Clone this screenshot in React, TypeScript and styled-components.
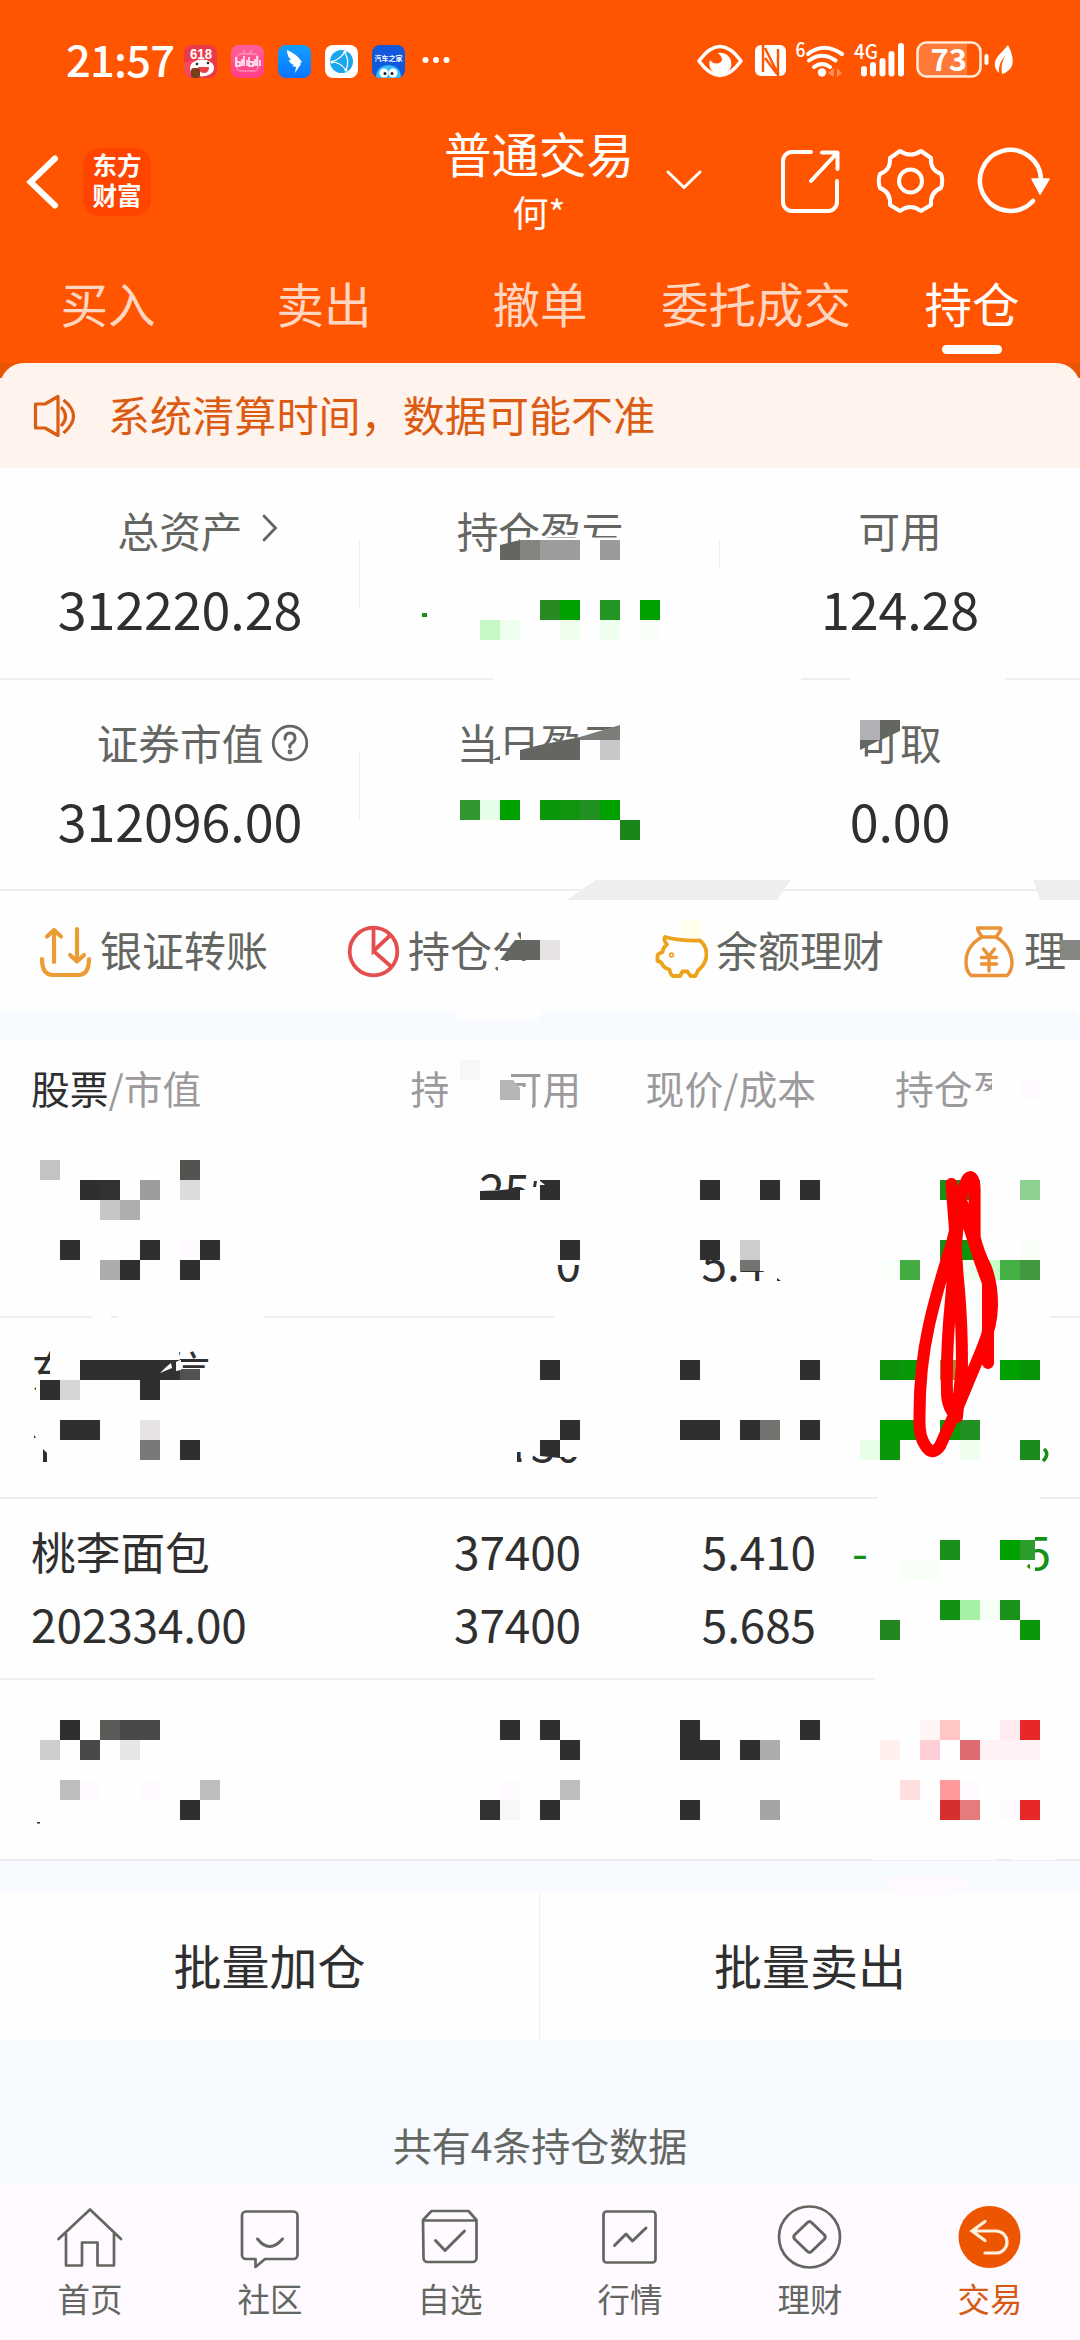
import React from "react";
import styled, { createGlobalStyle } from "styled-components";

const INK = "#2f2f2f";
const GREY = "#646662";
const PAPER = "#fefefe";
const BAND = "#f7faff";
const LINE = "#eeeeee";

const GlobalStyle = createGlobalStyle`
  * { box-sizing: border-box; }
  body {
    margin: 0;
    background: ${BAND};
    font-family: "Noto Sans CJK SC", "Noto Sans", sans-serif;
    color: ${INK};
  }
  svg { display: block; flex: none; }
`;

const Page = styled.div`
  position: relative;
  width: 1080px;
  height: 2340px;
  overflow: hidden;
  display: flex;
  flex-direction: column;
  background: ${BAND};
`;

/* ---------- header ---------- */

const Header = styled.header`
  height: 363px;
  flex: none;
  background: #ff5500;
  color: #fff;
  display: flex;
  flex-direction: column;
`;

const StatusBar = styled.div`
  height: 122px;
  padding: 0 64px 0 66px;
  display: flex;
  align-items: center;
  justify-content: space-between;
`;

const StatusGroup = styled.div<{ $gap: number }>`
  display: flex;
  align-items: center;
  gap: ${(p) => p.$gap}px;
`;

const Clock = styled.span`
  width: 104px;
  font-size: 43.5px;
  line-height: 50px;
  font-weight: 500;
  letter-spacing: -0.8px;
  margin-top: -5px;
`;

const AppBadge = styled.span<{ $bg: string }>`
  width: 33px;
  height: 33px;
  border-radius: 8px;
  overflow: hidden;
  background: ${(p) => p.$bg};
`;

const NavBar = styled.div`
  height: 120px;
  padding: 0 28px 0 26px;
  display: grid;
  grid-template-columns: 420px 186px 1fr;
  align-items: center;
`;

const NavLeft = styled.div`
  display: flex;
  align-items: center;
  gap: 23px;
`;

const Logo = styled.div`
  width: 68px;
  height: 68px;
  border-radius: 16px;
  background: #ff4400;
  padding-top: 2px;
  text-align: center;
  font-size: 24.5px;
  font-weight: 700;
  line-height: 30px;
`;

const Title = styled.div`
  display: flex;
  flex-direction: column;
  align-items: center;
  white-space: nowrap;
  font-size: 47.5px;
  line-height: 60px;
  margin-top: -3px;
`;

const Account = styled.span`
  font-size: 36px;
  line-height: 56px;
`;

const NavRight = styled.div`
  display: flex;
  align-items: center;
  padding-left: 28px;
`;

const Tabs = styled.nav`
  flex: 1;
  display: grid;
  grid-template-columns: repeat(5, 1fr);
`;

const Tab = styled.div<{ $active?: boolean }>`
  display: flex;
  flex-direction: column;
  align-items: center;
  padding-top: 25px;
  font-size: 47.5px;
  line-height: 72px;
  color: ${(p) => (p.$active ? "#fff" : "#ffd6c2")};
  &::after {
    content: "";
    width: 60px;
    height: 9px;
    margin-top: 6px;
    border-radius: 5px;
    background: ${(p) => (p.$active ? "#fff" : "transparent")};
  }
`;

/* ---------- notice ---------- */

const NoticeWrap = styled.div`
  height: 105px;
  flex: none;
  background: linear-gradient(#ea5505 0 15px, #fff3ee 15px);
`;

const Notice = styled.div`
  height: 100%;
  padding: 0 32px;
  display: flex;
  align-items: center;
  gap: 31px;
  border-radius: 24px 24px 0 0;
  background: #fff3ee;
  color: #db5b12;
  font-size: 42px;
  line-height: 60px;
  span { margin-top: -4px; letter-spacing: 0.1px; }
`;

/* ---------- summary ---------- */

const Summary = styled.section`
  flex: none;
  background: ${PAPER};
`;

const SummaryRow = styled.div`
  height: 211.5px;
  display: grid;
  grid-template-columns: repeat(3, 360px);
  border-bottom: 2px solid ${LINE};
`;

const Metric = styled.div<{ $tick: number }>`
  display: flex;
  flex-direction: column;
  align-items: center;
  padding-top: 32px;
  background: linear-gradient(#ececec, #ececec) no-repeat right 73px / 1.5px
    ${(p) => p.$tick}px;
  background-position: right 0 top 73px;
`;

const MetricLabel = styled.div`
  position: relative;
  font-size: 41.7px;
  line-height: 60px;
  color: ${GREY};
`;

const LabelIcon = styled.span<{ $gap: number }>`
  position: absolute;
  left: calc(100% + ${(p) => p.$gap}px);
  top: 12px;
`;

const MetricValue = styled.div`
  margin-top: 12px;
  font-size: 52px;
  line-height: 72px;
  letter-spacing: -0.1px;
`;

/* ---------- shortcuts ---------- */

const Shortcuts = styled.section`
  height: 120px;
  flex: none;
  display: flex;
  overflow: hidden;
  padding-left: 39px;
  background: ${PAPER};
`;

const Shortcut = styled.div`
  width: 308px;
  flex: none;
  display: flex;
  align-items: center;
  gap: 8px;
  font-size: 42px;
  line-height: 60px;
  color: ${GREY};
  white-space: nowrap;
  span { margin-top: -5px; }
`;

const Gap = styled.div<{ $h: number }>`
  height: ${(p) => p.$h}px;
  flex: none;
`;

/* ---------- holdings ---------- */

const Table = styled.section`
  flex: none;
  background: ${PAPER};
`;

const Line = styled.div`
  display: grid;
  grid-template-columns: 369px 181px 235px 235px;
  padding: 0 29px 0 31px;
`;

const HeadLine = styled(Line)`
  height: 96px;
  align-items: center;
  padding-bottom: 5px;
  font-size: 38.8px;
  line-height: 56px;
  color: #9c9a9c;
`;

const Holding = styled.div`
  height: 181px;
  padding-top: 15px;
  border-bottom: 2px solid ${LINE};
  font-size: 46px;
  line-height: 73px;
  ${Line} { height: 73px; }
`;

const Cell = styled.div<{ $shift?: number; $left?: boolean }>`
  text-align: ${(p) => (p.$left ? "left" : "right")};
  padding-right: ${(p) => (p.$left ? 0 : p.$shift || 0)}px;
  padding-left: ${(p) => (p.$left ? p.$shift || 0 : 0)}px;
  white-space: nowrap;
`;

const Name = styled(Cell)`
  font-size: 44.7px;
`;

const Figure = styled(Cell)`
  font-size: 46px;
  letter-spacing: -0.15px;
`;

const Profit = styled.div`
  display: flex;
  justify-content: space-between;
  padding-left: 36px;
  color: #149014;
`;

const Strong = styled.span`
  color: ${INK};
`;

const Spacer = styled.span<{ $w: number }>`
  display: inline-block;
  width: ${(p) => p.$w}px;
`;

/* ---------- batch actions and footer ---------- */

const Batch = styled.section`
  height: 150px;
  flex: none;
  display: grid;
  grid-template-columns: 1fr 1fr;
  background: ${PAPER};
`;

const BatchButton = styled.div`
  display: flex;
  align-items: center;
  justify-content: center;
  padding-bottom: 5px;
  font-size: 48px;
  &:first-child { border-right: 1px solid ${LINE}; }
`;

const Count = styled.div`
  height: 143px;
  flex: none;
  padding-top: 74px;
  text-align: center;
  font-size: 39px;
  line-height: 58px;
  color: ${GREY};
`;

const BottomNav = styled.nav`
  height: 156px;
  flex: none;
  display: grid;
  grid-template-columns: repeat(6, 180px);
  background: #fefaff;
`;

const NavItem = styled.div<{ $active?: boolean }>`
  display: flex;
  flex-direction: column;
  align-items: center;
  padding-top: 17px;
  font-size: 32.5px;
  line-height: 48px;
  color: ${(p) => (p.$active ? "#d55a14" : GREY)};
  span { margin-top: 3px; }
`;

const Markup = styled.svg`
  position: absolute;
  left: 0;
  top: 0;
  pointer-events: none;
`;

/* ---------- status icons ---------- */

const StatusIcons = () => (
  <svg width="320" height="62" viewBox="696 30 320 62" fill="#fff">
    <path d="M699 61q21-29 42 0q-21 29-42 0z" fill="none" stroke="#fff" strokeWidth="3.6" strokeLinejoin="round" />
    <path d="M718 53a11 11 0 1 1-8 7q5 6 11 2q3-4-3-9z" />
    <rect x="755" y="45" width="31" height="31" rx="6" />
    <path d="M763 45v27M765 48l12 24M765 58l12 16M778 76V49" fill="none" stroke="#ff5500" strokeWidth="2.4" />
    <text x="795.5" y="57" fontSize="20" fontWeight="500" textLength="10" lengthAdjust="spacingAndGlyphs">6</text>
    <g fill="none" stroke="#fff" strokeWidth="4" strokeLinecap="round">
      <path d="M808 54q16-12.500 34 0" />
      <path d="M809 60.500q13-9.500 26.500 0" />
      <path d="M814 67q8-6 16 0" />
    </g>
    <circle cx="822" cy="72.500" r="4.200" />
    <path d="M828 73l6-5v9zM842 73l-5-5v9z" opacity=".35" />
    <text x="854" y="59" fontSize="20.5" fontWeight="500" textLength="24" lengthAdjust="spacingAndGlyphs">4G</text>
    <rect x="861" y="66" width="6" height="10.500" rx="3" />
    <rect x="870" y="62" width="6" height="14.500" rx="3" />
    <rect x="879.500" y="58" width="6" height="18.500" rx="3" />
    <rect x="888.500" y="51" width="6" height="25.500" rx="3" />
    <rect x="898" y="43" width="6" height="33.500" rx="3" />
    <path d="M927 44h40v32h-40a8 8 0 0 1-8-8V52a8 8 0 0 1 8-8z" opacity=".22" />
    <rect x="917.500" y="42.500" width="63" height="34" rx="9" fill="none" stroke="#ffe9d8" strokeWidth="2.6" />
    <text x="930.5" y="71" fontSize="31" fontWeight="600">73</text>
    <rect x="984.500" y="54" width="4" height="11" rx="2" />
    <path d="M1008 45q9 18 1 25q-3 3-7 4q-2-11 4-19q-8 8-7 18q-8-8-1-17q5-5 10-11z" />
  </svg>
);

const BadgeArt = ({ kind }: { kind: number }) => (
  <svg width="33" height="33" viewBox="0 0 33 33">
    {kind === 0 && (
      <>
        <path d="M0 18l10-4 2 19H0z" fill="#f6475c" />
        <ellipse cx="18" cy="23" rx="12" ry="8.500" fill="#fff" />
        <text x="6" y="14" fontFamily="Liberation Sans, sans-serif" fontSize="14" fontWeight="700" fill="#fff" textLength="22" lengthAdjust="spacingAndGlyphs">618</text>
        <path d="M14 22h11q0 6-5 6t-6-6z" fill="#e9404c" />
        <circle cx="13" cy="19" r="1.300" fill="#222" />
        <circle cx="24" cy="18" r="1.300" fill="#222" />
        <rect x="7" y="23" width="9" height="10" rx="3" fill="#7a3d1c" />
      </>
    )}
    {kind === 1 && (
      <>
        <path d="M12 5l3 4M21 5l-3 4" stroke="#ff8fb5" strokeWidth="1.500" />
        <rect x="6" y="9" width="21" height="17" rx="4" fill="none" stroke="#ff8fb5" strokeWidth="1.500" />
        <path d="M5 12v9h4v-4H6M11 14v7M13 11v10M16 15v6M18 12v9h4v-4h-3M24 14v7M26 11v10M29 15v6" fill="none" stroke="#fff" strokeWidth="1.500" />
      </>
    )}
    {kind === 2 && (
      <path d="M9 5q10 4 15 12l-2 1 1 1-6 9 1-6-4-1 2-1q-5-2-5-5l2 0q-4-4-4-10z" fill="#fff" />
    )}
    {kind === 3 && (
      <>
        <circle cx="16.500" cy="16.500" r="11.500" fill="#1aa6ee" />
        <path d="M20 6q-3 7-13 11q8 0 14 8M20 8q5 8 1 17" fill="none" stroke="#fff" strokeWidth="1.200" />
        <circle cx="7" cy="17" r="1.600" fill="#fff" />
        <circle cx="20" cy="7" r="1.600" fill="#fff" />
        <circle cx="21" cy="25" r="1.600" fill="#fff" />
      </>
    )}
    {kind === 4 && (
      <>
        <text x="2.500" y="15.500" fontSize="7" fontWeight="700" fill="#fff" textLength="28" lengthAdjust="spacingAndGlyphs">汽车之家</text>
        <path d="M4 33q0-12 12.500-13Q29 21 29 33z" fill="#38bdf5" />
        <circle cx="12" cy="28" r="4.500" fill="#fff" />
        <circle cx="21" cy="28" r="4.500" fill="#fff" />
        <circle cx="13" cy="28.500" r="1.500" fill="#123" />
        <circle cx="20" cy="28.500" r="1.500" fill="#123" />
      </>
    )}
  </svg>
);

const BADGES = [
  "#e93a4a",
  "linear-gradient(#ff5f9a, #ff3f87)",
  "linear-gradient(#14a0ff, #0a74ff)",
  "#ffffff",
  "#1257dc",
];

/* ---------- header icons ---------- */

const BackIcon = () => (
  <svg width="34" height="60" viewBox="0 0 34 60" fill="none" stroke="#fff" strokeWidth="6" strokeLinecap="round" strokeLinejoin="miter">
    <path d="M29 6.500L4.500 30L29 53.500" />
  </svg>
);

const HeaderIcons = () => (
  <svg width="400" height="80" viewBox="660 142 400 80" fill="none" stroke="#fff" strokeWidth="4" strokeLinecap="round" strokeLinejoin="round">
    <path d="M668 172l16 15.500l16-15.500" strokeWidth="3" />
    <path d="M811 152h-19a9 9 0 0 0-9 9v41a9 9 0 0 0 9 9h36a9 9 0 0 0 9-9v-21" />
    <path d="M822 152.500h15.500V169M837 153l-26 28" />
    <path d="M900 151Q910.500 158 921 151L931 158Q930 170 941 174Q943.500 181 941 188Q930 192 931 205L921 211Q910.500 203 900 211L890 205Q891 192 880 188Q877.500 181 880 174Q891 170 890 158Z" />
    <circle cx="910.500" cy="181" r="11.500" />
    <path d="M1033 201A30.500 30.500 0 1 1 1041 180" strokeWidth="4.500" />
    <path d="M1032 179h17l-9 15z" fill="#fff" strokeWidth="1.500" />
  </svg>
);

const SpeakerIcon = () => (
  <svg width="45" height="46" viewBox="32 392 45 46" fill="none" stroke="#db5b12" strokeWidth="3.200" strokeLinejoin="round">
    <path d="M35.500 403h9.500l13-7.500v39l-13-7.500h-9.500z" />
    <path d="M61 406q9 9.500 0 19M63.500 399q20 16 0 33" />
  </svg>
);

const ChevronIcon = () => (
  <svg width="18" height="32" viewBox="0 0 18 32" fill="none" stroke={GREY} strokeWidth="2.800" strokeLinecap="round">
    <path d="M3 4l11.500 12L3 28" />
  </svg>
);

const HelpIcon = () => (
  <svg width="38" height="38" viewBox="0 0 38 38" fill="none" stroke={GREY} strokeWidth="2.800" strokeLinecap="round">
    <circle cx="19" cy="19" r="16.800" />
    <path d="M14 15q0-6 5-6t5 5q0 3-3 5t-2 4" strokeWidth="3" />
    <circle cx="19" cy="28" r="1" />
  </svg>
);

/* ---------- shortcut icons ---------- */

const TransferIcon = () => (
  <svg width="53" height="54" viewBox="39 923 53 54" fill="none" stroke="#ec9c35" strokeWidth="4.200" strokeLinecap="round" strokeLinejoin="round">
    <path d="M54 961V929M47 935.500l7-6.500l7 6.500M77 928v32M70 954l7 6.500l7-6.500" />
    <path d="M42 958q0 16 11 16h25q11 0 11-16" />
  </svg>
);

const PieIcon = () => (
  <svg width="53" height="54" viewBox="347 923 53 54" fill="none" stroke="#e54e4e" strokeWidth="3.800">
    <circle cx="373.500" cy="950.500" r="23.800" />
    <path d="M373.500 927v23l17-16M373.500 950l17 15" />
  </svg>
);

const PigIcon = () => (
  <svg width="53" height="54" viewBox="655 923 53 54" fill="none" stroke="#eba31c" strokeWidth="3.800" strokeLinejoin="round" strokeLinecap="round">
    <path d="M700 939.500Q679 940 665 936q-2 3 2 7.500q-4 3-4.500 7.500q-5 2-5 3.500v5.500q4 .5 5.500 4.500q2 3 6.500 4q1 5.500 3.500 6.500h7l2.500-4.500h5l3 4.500h5l2.500-5.500q8.500-7 8.500-16q0-8.500-6.500-14z" />
    <circle cx="671.500" cy="954" r=".8" />
  </svg>
);

const BagIcon = () => (
  <svg width="53" height="54" viewBox="963 923 53 54" fill="none" stroke="#eb9136" strokeWidth="3.400" strokeLinejoin="round" strokeLinecap="round">
    <path d="M978 927h22q3 0-4 9h-14q-6-9-4-9z" />
    <path d="M982 936q-16 9-16 25q0 9 5 13.500h36q5-4.500 5-13.500q-1-16-16-25" />
    <path d="M983.500 948l5.500 7l5.500-7M981.500 956.500h15M981.500 963h15M989 956v14" />
  </svg>
);

/* ---------- bottom nav icons ---------- */

const TabIcon = ({ kind }: { kind: string }) => (
  <svg width="70" height="70" viewBox="0 0 70 70" fill="none" stroke={GREY} strokeWidth="2.700" strokeLinejoin="round" strokeLinecap="round">
    {kind === "首页" && (
      <path d="M3.500 38L35 8.500L66 38M11 33v31.500h16V41.500h15.500v23h16.500V33" />
    )}
    {kind === "社区" && (
      <>
        <path d="M11 10.500h47.500a4 4 0 0 1 4 4V54a4 4 0 0 1-4 4H30l-9.500 8V58H11a4 4 0 0 1-4-4V14.500a4 4 0 0 1 4-4z" />
        <path d="M22.500 38q12 15 25 0" strokeWidth="3" />
      </>
    )}
    {kind === "自选" && (
      <>
        <path d="M8 19l8.500-9h37L61.500 19v38a4 4 0 0 1-4 4h-45a4 4 0 0 1-4-4zM8.500 19.500h53" />
        <path d="M20.500 39.500L30 49.500L49.500 30" strokeWidth="3" />
      </>
    )}
    {kind === "行情" && (
      <>
        <rect x="8.500" y="10.500" width="52" height="51" rx="3" />
        <path d="M19.500 44.500L31 33l6.500 7L51 27" strokeWidth="3" />
      </>
    )}
    {kind === "理财" && (
      <>
        <circle cx="34.500" cy="36" r="30.500" />
        <path d="M32.500 21.500q2-2 4 0L49.500 34q1.500 2 0 4L36.500 50.500q-2 2-4 0L19.500 38q-1.500-2 0-4z" strokeWidth="3" />
      </>
    )}
    {kind === "交易" && (
      <>
        <circle cx="34.500" cy="36" r="31" fill="#ee5500" stroke="none" />
        <path d="M30 20.500L17 30l13 9.500M17.500 30H41a11 11 0 0 1 0 22H30" stroke="#fff0e0" strokeWidth="3.200" strokeLinejoin="miter" />
      </>
    )}
  </svg>
);

/* ---------- redaction mosaic: [y, x, colour, x, colour, ...] ---------- */

const K = INK;
const MOSAIC: (number | string)[][] = [
  [540, 520, "#838581", 540, "#9c9d9a", 560, "#9c9d9a", 600, "#9c999c"],
  [600, 540, "#278b22", 560, "#00a000", 600, "#229522", 640, "#00a000"],
  [620, 480, "#c6f7c6", 500, "#efffef", 560, "#eeffee", 600, "#eeffee", 640, "#f8fff8"],
  [740, 600, "#cac7ca"],
  [800, 460, "#309632", 480, "#e6fee8", 500, "#00a000", 540, "#0a980a", 560, "#119511", 580, "#229022", 600, "#00a000"],
  [820, 620, "#1a861a"],
  [940, 540, "#e6e2e6", 1060, "#858783"],
  [1060, 460, "#f7f7f7"],
  [1080, 1020, "#fffaff"],
  [1160, 40, "#c4c2c5", 180, "#525450"],
  [1180, 80, K, 100, "#313330", 140, "#9c9d9a", 180, "#dddbde", 540, K, 700, K, 760, K, 800, K, 940, "#1a8f1a", 960, "#00a000", 1020, "#8dd08f"],
  [1200, 100, "#c6c6c6", 120, "#adadad"],
  [1240, 60, K, 140, K, 180, "#fffaff", 200, K, 560, K, 700, K, 740, "#cecece", 940, "#1a8a1a", 960, "#0a980a", 1020, "#f7fff7"],
  [1260, 100, "#adabae", 120, K, 180, K, 880, "#f9fff9", 900, "#42ac42", 960, "#eeffee", 980, "#c6ffc8", 1000, "#42b042", 1020, "#429942"],
  [1360, 80, K, 100, K, 120, K, 140, K, 160, "#313330", 540, K, 680, K, 800, K, 880, "#0c910c", 900, "#079a07", 940, "#b1882f", 1000, "#00a000", 1020, "#089408"],
  [1380, 40, K, 60, "#d6d6d6", 140, K],
  [1420, 60, K, 80, K, 140, "#e6e2e6", 560, K, 680, K, 700, K, 740, K, 760, "#727470", 800, K, 880, "#009c00", 900, "#009c00", 940, "#089a08", 960, "#229022"],
  [1440, 140, "#7b787b", 180, K, 860, "#e6ffe6", 880, "#0a980a", 960, "#eeffee", 1020, "#1a8b1a"],
  [1540, 940, "#1a8f1a", 1000, "#00a000"],
  [1560, 900, "#f7fff7", 920, "#f7fff7"],
  [1600, 940, "#119111", 960, "#a7f1a7", 980, "#f5fff5", 1000, "#1a921a"],
  [1620, 880, "#228622", 1020, "#0a980a"],
  [1720, 60, K, 100, "#5a5c57", 120, "#484848", 140, "#484848", 500, K, 540, K, 680, K, 800, K, 920, "#fff5f5", 940, "#ffc6c6", 1000, "#ffeaee", 1020, "#e62828"],
  [1740, 40, "#cecece", 80, "#484848", 120, "#e6e6e6", 560, K, 680, K, 700, K, 740, K, 760, "#adabae", 880, "#fff0ee", 920, "#ffced6", 960, "#de6b70", 980, "#fff2f6", 1000, "#fff2f6", 1020, "#fff2f6"],
  [1780, 60, "#bdbdbd", 80, "#fffaff", 140, "#fffaff", 200, "#bdbdbd", 500, "#fffaff", 560, "#bdbdbd", 900, "#ffdfdd", 940, "#ff999b", 960, "#fffaff"],
  [1800, 180, K, 480, "#313330", 500, "#f7f7f7", 540, K, 680, K, 760, "#a5a3a6", 940, "#d53030", 960, "#e67b7b", 1000, "#fffaff", 1020, "#e62828"],
];

/* erased areas: [x, y, width, height] */
const ERASED = [
  [520, 537.5, 102, 20],
  [493, 676, 308, 6], [850, 676, 155, 6],
  [92, 1314, 19, 6], [118, 1314, 146, 6], [554, 1314, 496, 6],
  [878, 1495, 162, 6], [875, 1676, 205, 6],
  [498, 961, 44, 14], [521, 928, 20, 12],
  [498, 1087, 34, 24], [498, 1066, 13, 22],
  [992, 1060, 60, 56], [968, 1091, 26, 24],
  [478, 1190, 66, 24], [553, 1238, 30, 27],
  [700, 1240, 66, 19], [738, 1245, 30, 26],
  [500, 1422, 84, 30], [538, 1448, 44, 9],
  [498, 1450, 19, 16], [521.5, 1450, 11, 16],
  [50, 1336, 26, 62], [28, 1375, 22, 8], [36, 1383, 16, 16],
  [158, 1368, 54, 30], [158, 1336, 21, 40],
  [1030, 1530, 5, 46],
];

const Mosaic = () => (
  <Markup width="1080" height="2340" viewBox="0 0 1080 2340">
    {ERASED.map(([x, y, w, h], i) => (
      <rect key={i} x={x} y={y} width={w} height={h} fill={PAPER} />
    ))}
    <path d="M500 757L540 745.500L580 737L622 725V765H500zM855 750L900 731V718H855z" fill={PAPER} />
    <path d="M872 1858h123v2h-123zM1012 1858h43v2h-43z" fill={PAPER} />
    <g shapeRendering="crispEdges">
      {MOSAIC.flatMap(([y, ...cells]) =>
        cells
          .filter((_, i) => i % 2 === 0)
          .map((x, i) => (
            <rect key={`${y}-${x}`} x={x} y={y} width="20" height="20" fill={String(cells[i * 2 + 1])} />
          ))
      )}
    </g>
    <path d="M680 920h20v18h-8l-12-1z" fill="#ffffec" />
    <g fill={GREY}>
      <path d="M500 545l20-5v20h-20zM520 750l20-5l40-8v23h-60zM492 760l8-4v4z" />
      <path d="M580 737l40-12v15h-40z" fill="#7b7d79" />
      <path d="M860 720h20v20h-20z" fill="#b2b0b4" />
      <path d="M880 720h20v11l-20 9.500zM860 740h20l-20 10z" />
      <path d="M515 940h25v20h-40z" />
    </g>
    <path d="M567 900l28.500-20H791l-14 20zM1033.500 880H1080v20h-40z" fill="#eeeeee" />
    <path d="M459 1010h85l-7 10h-82zM1075 1010h5v11zM448 1042l8-2h60l8 2z" fill={PAPER} />
    <path d="M880 1878h90q-12 19-46 19t-44-19z" fill="#fefaff" />
    <path d="M500 1080h13l7 8v12h-20z" fill="#b5b5b5" />
    <rect x="422" y="613" width="5" height="4" fill="#1c8c1c" />
    <rect x="740" y="1260" width="20" height="11" fill="#727470" />
    <rect x="180" y="1369" width="20" height="11" fill="#525252" />
    <rect x="1020" y="1540" width="15" height="20" fill="#2c9c2c" />
    <g fill={INK}>
      <path d="M480 1191q20 0 40-3v12h-40zM534 1181h3l-1 6h-3zM777 1278l4 3h-4zM540 1440h20v18l-20-2zM43 1449l4 4v9h-4zM34 1435l2 3h-2zM37 1822h3v1.500h-3z" />
    </g>
    <path d="M160 1373q8-8 11-10l1 5zM176 1371v-9q3-2 5-2v10zM540 1181l5 4h-5z" fill={PAPER} />
    <path d="M1044 1449q6 5-1 12" fill="none" stroke="#149014" strokeWidth="3.500" />
    <path
      d="M951.500 1184L955 1230Q956 1260 959 1290Q962 1325 962 1365L957 1417Q947 1408 947 1392Q946 1350 951 1300Q956 1240 960 1205Q965 1177 970.500 1177Q974.500 1178 974.600 1190V1237Q978 1252 986 1268Q992 1284 992 1305Q992 1325 982 1349L960 1402L940 1446Q932 1457 925 1445Q919 1436 919.500 1420Q919 1370 929 1325Q937 1290 952 1243L962 1203Q970 1230 979 1258L988 1283V1363"
      fill="none"
      stroke="#ff0000"
      strokeWidth="12"
      strokeLinecap="round"
      strokeLinejoin="round"
    />
  </Markup>
);

const TABS = ["买入", "卖出", "撤单", "委托成交", "持仓"];
const BOTTOM = ["首页", "社区", "自选", "行情", "理财", "交易"];

export default function App() {
  return (
    <Page>
      <GlobalStyle />
      <Header>
        <StatusBar>
          <StatusGroup $gap={14}>
            <Clock>21:57</Clock>
            {BADGES.map((bg, i) => (
              <AppBadge key={i} $bg={bg}>
                <BadgeArt kind={i} />
              </AppBadge>
            ))}
            <svg width="34" height="10" viewBox="0 0 34 10" fill="#fff">
              <circle cx="6.500" cy="4" r="3" />
              <circle cx="17" cy="4" r="3" />
              <circle cx="27.500" cy="4" r="3" />
            </svg>
          </StatusGroup>
          <StatusIcons />
        </StatusBar>
        <NavBar>
          <NavLeft>
            <BackIcon />
            <Logo>
              东方
              <br />
              财富
            </Logo>
          </NavLeft>
          <Title>
            普通交易
            <Account>何*</Account>
          </Title>
          <NavRight>
            <HeaderIcons />
          </NavRight>
        </NavBar>
        <Tabs>
          {TABS.map((t) => (
            <Tab key={t} $active={t === "持仓"}>
              {t}
            </Tab>
          ))}
        </Tabs>
      </Header>

      <NoticeWrap>
        <Notice>
          <SpeakerIcon />
          <span>系统清算时间，数据可能不准</span>
        </Notice>
      </NoticeWrap>

      <Summary>
        <SummaryRow>
          <Metric $tick={66}>
            <MetricLabel>
              总资产
              <LabelIcon $gap={18}>
                <ChevronIcon />
              </LabelIcon>
            </MetricLabel>
            <MetricValue>312220.28</MetricValue>
          </Metric>
          <Metric $tick={27}>
            <MetricLabel>持仓盈亏</MetricLabel>
          </Metric>
          <Metric $tick={0}>
            <MetricLabel>可用</MetricLabel>
            <MetricValue>124.28</MetricValue>
          </Metric>
        </SummaryRow>
        <SummaryRow>
          <Metric $tick={66}>
            <MetricLabel>
              证券市值
              <LabelIcon $gap={8}>
                <HelpIcon />
              </LabelIcon>
            </MetricLabel>
            <MetricValue>312096.00</MetricValue>
          </Metric>
          <Metric $tick={0}>
            <MetricLabel>当日盈亏</MetricLabel>
          </Metric>
          <Metric $tick={0}>
            <MetricLabel>可取</MetricLabel>
            <MetricValue>0.00</MetricValue>
          </Metric>
        </SummaryRow>
      </Summary>

      <Shortcuts>
        <Shortcut>
          <TransferIcon />
          <span>银证转账</span>
        </Shortcut>
        <Shortcut>
          <PieIcon />
          <span>持仓分</span>
        </Shortcut>
        <Shortcut>
          <PigIcon />
          <span>余额理财</span>
        </Shortcut>
        <Shortcut>
          <BagIcon />
          <span>理</span>
        </Shortcut>
      </Shortcuts>

      <Gap $h={30} />

      <Table>
        <HeadLine>
          <Cell $left>
            <Strong>股票</Strong>/市值
          </Cell>
          <Cell>
            持<Spacer $w={54} />
            可用
          </Cell>
          <Cell>现价/成本</Cell>
          <Cell $left $shift={79}>
            持仓盈
          </Cell>
        </HeadLine>
        <Holding>
          <Line>
            <Name $left />
            <Figure $shift={51}>25</Figure>
          </Line>
          <Line>
            <Name $left />
            <Figure>0</Figure>
            <Figure $shift={51}>5.4</Figure>
          </Line>
        </Holding>
        <Holding>
          <Line>
            <Name $left>
              东<Spacer $w={90} />信
            </Name>
          </Line>
          <Line>
            <Name $left />
            <Figure>130</Figure>
          </Line>
        </Holding>
        <Holding>
          <Line>
            <Name $left>桃李面包</Name>
            <Figure>37400</Figure>
            <Figure>5.410</Figure>
            <Profit>
              <span>-</span>
              <span>5</span>
            </Profit>
          </Line>
          <Line>
            <Figure $left>202334.00</Figure>
            <Figure>37400</Figure>
            <Figure>5.685</Figure>
          </Line>
        </Holding>
        <Holding />
      </Table>

      <Gap $h={30} />

      <Batch>
        <BatchButton>批量加仓</BatchButton>
        <BatchButton>批量卖出</BatchButton>
      </Batch>
      <Count>共有4条持仓数据</Count>

      <BottomNav>
        {BOTTOM.map((t) => (
          <NavItem key={t} $active={t === "交易"}>
            <TabIcon kind={t} />
            <span>{t}</span>
          </NavItem>
        ))}
      </BottomNav>

      <Mosaic />
    </Page>
  );
}
